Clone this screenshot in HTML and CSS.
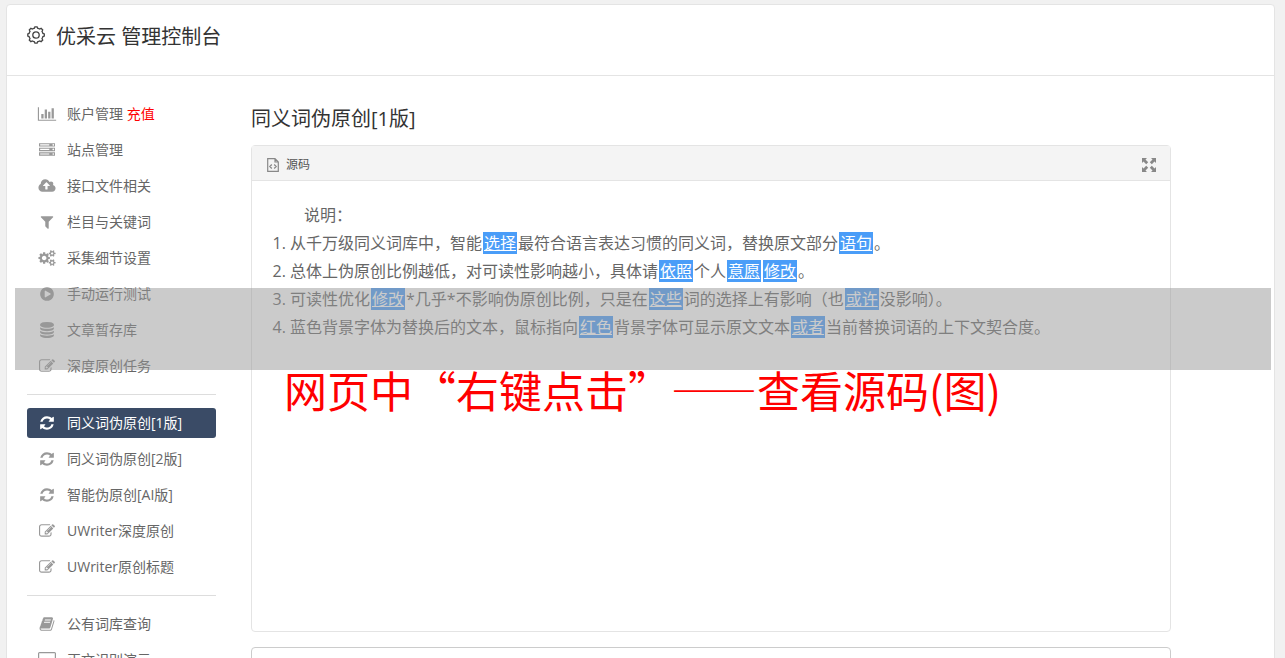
FILE: index.html
```
<!DOCTYPE html>
<html lang="zh-CN">
  <head>
    <meta charset="UTF-8" />
    <meta name="viewport" content="width=device-width, initial-scale=1.0" />
    <title>优采云 管理控制台</title>
    <link rel="stylesheet" href="styles.css">
  </head>
  <body>
    <svg class="sprite" aria-hidden="true">
      <symbol id="i-chart" viewBox="0 0 2048 1792"><path d="M640 896v512h-256v-512h256zm384-512v1024h-256v-1024h256zm1024 1152v128h-2048v-1536h128v1408h1920zm-640-896v768h-256v-768h256zm384-384v1152h-256v-1152h256z"/></symbol>
      <symbol id="i-server" viewBox="0 0 1792 1792"><path fill-rule="evenodd" d="M128 1408h1024v-128h-1024v128zm0-512h1024v-128h-1024v128zm1568 448q0-40-28-68t-68-28-68 28-28 68 28 68 68 28 68-28 28-68zm-1568-960h1024v-128h-1024v128zm1568 448q0-40-28-68t-68-28-68 28-28 68 28 68 68 28 68-28 28-68zm0-512q0-40-28-68t-68-28-68 28-28 68 28 68 68 28 68-28 28-68zm96 832v384h-1792v-384h1792zm0-512v384h-1792v-384h1792zm0-512v384h-1792v-384h1792z"/></symbol>
      <symbol id="i-upload" viewBox="0 0 2048 1792"><path fill-rule="evenodd" d="M1344 864q0-14-9-23l-352-352q-9-9-23-9t-23 9l-351 351q-10 12-10 24 0 14 9 23t23 9h224v352q0 13 9.500 22.500t22.500 9.500h192q13 0 22.500-9.500t9.500-22.500v-352h224q13 0 22.500-9.500t9.500-22.500zm640 288q0 159-112.500 271.500t-271.500 112.500h-1088q-185 0-316.500-131.500t-131.500-316.500q0-130 70-240t188-165q-2-30-2-43 0-212 150-362t362-150q156 0 285.500 87t188.500 231q71-62 166-62 106 0 181 75t75 181q0 76-41 138 130 31 213.500 135.500t83.500 238.500z"/></symbol>
      <symbol id="i-filter" viewBox="0 0 1792 1792"><path d="M1595 295q17 41-14 70l-493 493v742q0 42-39 59-13 5-25 5-27 0-45-19l-256-256q-19-19-19-45v-486l-493-493q-31-29-14-70 17-39 59-39h1280q42 0 59 39z"/></symbol>
      <symbol id="i-cogs" viewBox="0 0 1920 1792"><path fill-rule="evenodd" d="M896 896q0-106-75-181t-181-75-181 75-75 181 75 181 181 75 181-75 75-181zm768 512q0-52-38-90t-90-38-90 38-38 90q0 53 37.500 90.500t90.500 37.500 90.500-37.500 37.500-90.500zm0-1024q0-52-38-90t-90-38-90 38-38 90q0 53 37.500 90.500t90.500 37.500 90.500-37.500 37.500-90.500zm-384 421v185q0 10-7 19.500t-16 10.500l-155 24q-11 35-32 76 34 48 90 115 7 11 7 20 0 12-7 19-23 30-82.500 89.500t-78.500 59.500q-11 0-21-7l-115-90q-37 19-77 31-11 108-23 155-7 24-30 24h-186q-11 0-20-7.500t-10-17.500l-23-153q-34-10-75-31l-118 89q-7 7-20 7-11 0-21-8-144-133-144-160 0-9 7-19 10-14 41-53t47-61q-23-44-35-82l-152-24q-10-1-17-9.500t-7-19.500v-185q0-10 7-19.500t16-10.500l155-24q11-35 32-76-34-48-90-115-7-11-7-20 0-12 7-20 22-30 82-89t79-59q11 0 21 7l115 90q34-18 77-32 11-108 23-154 7-24 30-24h186q11 0 20 7.500t10 17.500l23 153q34 10 75 31l118-89q8-7 20-7 11 0 21 8 144 133 144 160 0 8-7 19-12 16-42 54t-45 60q23 48 34 82l152 23q10 2 17 10.500t7 19.500zm640 533v140q0 16-149 31-12 27-30 52 51 113 51 138 0 4-4 7-122 71-124 71-8 0-46-47t-52-68q-20 2-30 2t-30-2q-14 21-52 68t-46 47q-2 0-124-71-4-3-4-7 0-25 51-138-18-25-30-52-149-15-149-31v-140q0-16 149-31 13-29 30-52-51-113-51-138 0-4 4-7 4-2 35-20t59-34 30-16q8 0 46 46.500t52 67.500q20-2 30-2t30 2q51-71 92-112l6-2q4 0 124 70 4 3 4 7 0 25-51 138 17 23 30 52 149 15 149 31zm0-1024v140q0 16-149 31-12 27-30 52 51 113 51 138 0 4-4 7-122 71-124 71-8 0-46-47t-52-68q-20 2-30 2t-30-2q-14 21-52 68t-46 47q-2 0-124-71-4-3-4-7 0-25 51-138-18-25-30-52-149-15-149-31v-140q0-16 149-31 13-29 30-52-51-113-51-138 0-4 4-7 4-2 35-20t59-34 30-16q8 0 46 46.500t52 67.500q20-2 30-2t30 2q51-71 92-112l6-2q4 0 124 70 4 3 4 7 0 25-51 138 17 23 30 52 149 15 149 31z"/></symbol>
      <symbol id="i-play" viewBox="0 0 1792 1792"><path fill-rule="evenodd" d="M896 128q209 0 385.500 103t279.500 279.500 103 385.500-103 385.500-279.500 279.500-385.500 103-385.500-103-279.500-279.500-103-385.500 103-385.500 279.500-279.500 385.500-103zm384 823q32-18 32-55t-32-55l-544-320q-31-19-64-1-32 19-32 56v640q0 37 32 56 16 8 32 8 17 0 32-9z"/></symbol>
      <symbol id="i-database" viewBox="0 0 1792 1792"><path d="M896 768q237 0 443-43t325-127v170q0 69-103 128t-280 93.500-385 34.500-385-34.500-280-93.500-103-128v-170q119 84 325 127t443 43zm0 768q237 0 443-43t325-127v170q0 69-103 128t-280 93.500-385 34.500-385-34.500-280-93.500-103-128v-170q119 84 325 127t443 43zm0-384q237 0 443-43t325-127v170q0 69-103 128t-280 93.500-385 34.500-385-34.500-280-93.500-103-128v-170q119 84 325 127t443 43zm0-1152q208 0 385 34.500t280 93.500 103 128v128q0 69-103 128t-280 93.500-385 34.500-385-34.500-280-93.500-103-128v-128q0-69 103-128t280-93.500 385-34.500z"/></symbol>
      <symbol id="i-edit" viewBox="0 0 1792 1792"><path fill-rule="evenodd" d="M888 1184l116-116-152-152-116 116v56h96v96h56zm440-720q-16-16-33 1l-350 350q-17 17-1 33t33-1l350-350q17-17 1-33zm80 594v190q0 119-84.500 203.500t-203.500 84.500h-832q-119 0-203.500-84.500t-84.500-203.500v-832q0-119 84.500-203.500t203.500-84.500h832q63 0 117 25 15 7 18 23 3 17-9 29l-49 49q-14 14-32 8-23-6-45-6h-832q-66 0-113 47t-47 113v832q0 66 47 113t113 47h832q66 0 113-47t47-113v-126q0-13 9-22l64-64q15-15 35-7t20 29zm-96-738l288 288-672 672h-288v-288zm444 132l-92 92-288-288 92-92q28-28 68-28t68 28l152 152q28 28 28 68t-28 68z"/></symbol>
      <symbol id="i-refresh" viewBox="0 0 1792 1792"><path d="M1639 1056q0 5-1 7-64 268-268 434.500t-478 166.500q-146 0-282.500-55t-243.500-157l-129 129q-19 19-45 19t-45-19-19-45v-448q0-26 19-45t45-19h448q26 0 45 19t19 45-19 45l-137 137q71 66 161 102t187 36q134 0 250-65t186-179q11-17 53-117 8-23 30-23h192q13 0 22.500 9.500t9.500 22.500zm25-800v448q0 26-19 45t-45 19h-448q-26 0-45-19t-19-45 19-45l138-138q-148-137-349-137-134 0-250 65t-186 179q-11 17-53 117-8 23-30 23h-199q-13 0-22.500-9.500t-9.500-22.500v-7q65-268 270-434.500t480-166.500q146 0 284 55.500t245 156.500l130-129q19-19 45-19t45 19 19 45z"/></symbol>
      <symbol id="i-book" viewBox="0 0 1792 1792"><path fill-rule="evenodd" d="M1703 478q40 57 18 129l-275 906q-19 64-76.500 107.500t-122.500 43.500h-923q-77 0-148.500-53.500t-99.500-131.500q-24-67-2-127 0-4 3-27t4-37q1-8-3-21.500t-3-19.500q2-11 8-21t16.500-23.500 16.500-23.500q23-38 45-91.500t30-91.500q3-10 .5-30t-.5-28q3-11 17-28t17-23q21-36 42-92t25-90q1-9-2.500-32t.5-28q4-13 22-30.500t22-22.500q19-26 42.500-84.500t27.500-96.500q1-8-3-25.500t-2-26.500q2-8 9-18t18-23 17-21q8-12 16.500-30.500t15-35 16-36 19.500-32 26.500-23.500 36-11.500 47.500 5.500l-1 3q38-9 51-9h761q74 0 114 56t18 130l-274 906q-36 119-71.500 153.500t-128.500 34.500h-869q-27 0-38 15-11 16-1 43 24 70 144 70h923q29 0 56-15.500t35-41.500l300-987q7-22 5-57 38 15 59 43zm-1064 2q-4 13 2 22.500t20 9.500h608q13 0 25.500-9.500t16.500-22.500l21-64q4-13-2-22.500t-20-9.500h-608q-13 0-25.500 9.500t-16.500 22.500zm-83 256q-4 13 2 22.500t20 9.500h608q13 0 25.500-9.500t16.500-22.500l21-64q4-13-2-22.500t-20-9.500h-608q-13 0-25.500 9.500t-16.500 22.500z"/></symbol>
      <symbol id="i-desktop" viewBox="0 0 18 16"><path fill-rule="evenodd" d="M1.500 0h15A1.500 1.500 0 0 1 18 1.500v10a1.500 1.500 0 0 1-1.500 1.500H11v2h1v1H6v-1h1v-2H1.500A1.500 1.500 0 0 1 0 11.500v-10A1.500 1.500 0 0 1 1.500 0zM1.200 1.200v9h15.600v-9z"/></symbol>
    </svg>

    <div class="page">
      <header class="header">
        <svg class="gear" viewBox="0 0 18 18" aria-hidden="true">
          <path d="M6.300 2.500L7.400 2.200 7.900.8h2.200l.5 1.400 1.100.3 1 .6 1.400-.7 1.600 1.600-.7 1.400.6 1 .3 1 1.400.5v2.200l-1.400.5-.3 1-.6 1 .7 1.400-1.600 1.600-1.400-.7-1 .6-1.100.3-.5 1.400H7.900l-.5-1.400-1.100-.3-1-.6-1.400.7L2.300 14l.7-1.400-.6-1-.3-1L.8 10.100V7.900l1.300-.5.3-1 .6-1L2.300 4l1.600-1.600 1.400.7z"/>
          <circle cx="9" cy="9" r="3.200"/>
        </svg>
        <h1>优采云 管理控制台</h1>
      </header>

      <div class="body">
        <nav class="sidebar">
          <ul>
            <li><a href="#"><svg class="icon"><use href="#i-chart"/></svg><span>账户管理 <em>充值</em></span></a></li>
            <li><a href="#"><svg class="icon"><use href="#i-server"/></svg>站点管理</a></li>
            <li><a href="#"><svg class="icon"><use href="#i-upload"/></svg>接口文件相关</a></li>
            <li><a href="#"><svg class="icon"><use href="#i-filter"/></svg>栏目与关键词</a></li>
            <li><a href="#"><svg class="icon"><use href="#i-cogs"/></svg>采集细节设置</a></li>
            <li><a href="#"><svg class="icon"><use href="#i-play"/></svg>手动运行测试</a></li>
            <li><a href="#"><svg class="icon"><use href="#i-database"/></svg>文章暂存库</a></li>
            <li><a href="#"><svg class="icon"><use href="#i-edit"/></svg>深度原创任务</a></li>
          </ul>
          <ul>
            <li><a class="active" href="#"><svg class="icon"><use href="#i-refresh"/></svg>同义词伪原创[1版]</a></li>
            <li><a href="#"><svg class="icon"><use href="#i-refresh"/></svg>同义词伪原创[2版]</a></li>
            <li><a href="#"><svg class="icon"><use href="#i-refresh"/></svg>智能伪原创[AI版]</a></li>
            <li><a href="#"><svg class="icon"><use href="#i-edit"/></svg>UWriter深度原创</a></li>
            <li><a href="#"><svg class="icon"><use href="#i-edit"/></svg>UWriter原创标题</a></li>
          </ul>
          <ul>
            <li><a href="#"><svg class="icon"><use href="#i-book"/></svg>公有词库查询</a></li>
            <li><a href="#"><svg class="icon"><use href="#i-desktop"/></svg>正文识别演示</a></li>
          </ul>
        </nav>

        <main class="main">
          <h2>同义词伪原创[1版]</h2>
          <section class="editor">
            <div class="toolbar">
              <button type="button" class="source">
                <svg viewBox="0 0 12 14" aria-hidden="true"><path d="M.7.700h7.300l3.300 3.300v9.300H.7zM8 .7V4h3.300M4.800 6.500L2.800 8.500l2 2M7.200 6.500l2 2-2 2"/></svg>
                源码
              </button>
              <button type="button" class="expand" aria-label="全屏">
                <svg viewBox="0 0 14 14" aria-hidden="true"><path d="M0 0h5L3.500 1.500 6.200 4.200 4.200 6.200 1.500 3.500 0 5zM14 0v5l-1.500-1.500L9.800 6.200 7.800 4.200l2.700-2.700L9 0zM0 14V9l1.500 1.500L4.200 7.800 6.200 9.800l-2.700 2.700L5 14zM14 14H9l1.500-1.500L7.800 9.800 9.800 7.800l2.700 2.700L14 9z"/></svg>
              </button>
            </div>
            <div class="content">
              <p>说明：</p>
              <ol>
                <li>从千万级同义词库中，智能<a href="#">选择</a>最符合语言表达习惯的同义词，替换原文部分<a href="#">语句</a>。</li>
                <li>总体上伪原创比例越低，对可读性影响越小，具体请<a href="#">依照</a>个人<a href="#">意愿</a><a href="#">修改</a>。</li>
                <li>可读性优化<a href="#">修改</a>*几乎*不影响伪原创比例，只是在<a href="#">这些</a>词的选择上有影响（也<a href="#">或许</a>没影响）。</li>
                <li>蓝色背景字体为替换后的文本，鼠标指向<a href="#">红色</a>背景字体可显示原文文本<a href="#">或者</a>当前替换词语的上下文契合度。</li>
              </ol>
            </div>
          </section>
          <textarea class="result" aria-label="结果"></textarea>
        </main>
      </div>
    </div>

    <div class="banner">
      <div class="band"></div>
      <p>网页中“右键点击”——查看源码(图)</p>
    </div>
  </body>
</html>
```
FILE: styles.css
```
* {
  margin: 0;
  padding: 0;
  box-sizing: border-box;
}
body {
  position: relative;
  height: 100vh;
  overflow: hidden;
  padding: 4px 10px 0 6px;
  background: #f1f1f1;
  color: #666;
  font: 14px/20px "Open Sans", "Noto Sans CJK SC", sans-serif;
}
a {
  color: inherit;
  text-decoration: none;
}
ul {
  list-style: none;
}
button {
  border: 0;
  background: none;
  color: inherit;
  font: inherit;
}
.sprite {
  display: none;
}
.page {
  background: #fff;
  border: 1px solid #e4e4e4;
  border-radius: 4px;
}
.header {
  display: flex;
  align-items: flex-start;
  gap: 11px;
  padding: 16px 20px 22px;
  border-bottom: 1px solid #e4e4e4;
}
.header h1 {
  color: #333;
  font-size: 20px;
  font-weight: 400;
  line-height: 32px;
}
.gear {
  width: 18px;
  height: 18px;
  margin-top: 5px;
  fill: none;
  stroke: #444;
  stroke-width: 1.3;
}
.body {
  display: flex;
  gap: 35px;
  padding: 23px 103px 0 20px;
}

/* 侧边栏 */
.sidebar {
  flex: 0 0 189px;
}
.sidebar ul {
  display: flex;
  flex-direction: column;
  gap: 6px;
}
.sidebar ul + ul {
  margin-top: 13px;
  padding-top: 13px;
  border-top: 1px solid #ddd;
}
.sidebar a {
  display: flex;
  align-items: center;
  gap: 10px;
  height: 30px;
  padding: 0 10px;
  border-radius: 3px;
}
.sidebar em {
  color: #f00;
  font-style: normal;
}
.sidebar .active {
  background: #3a4b66;
  color: #fff;
}
.icon {
  width: 20px;
  height: 16px;
  fill: #999;
}
.active .icon {
  fill: #fff;
}

/* 编辑区 */
.main {
  flex: 1;
  min-width: 0;
}
.main h2 {
  padding: 4px 0 11px;
  color: #333;
  font-size: 20px;
  font-weight: 400;
  line-height: 31px;
}
.editor {
  min-height: 487px;
  border: 1px solid #e4e4e4;
  border-radius: 4px;
}
.toolbar {
  display: flex;
  align-items: center;
  justify-content: space-between;
  height: 35px;
  padding: 3px 14px 0 15px;
  background: #f4f4f4;
  border-bottom: 1px solid #e4e4e4;
}
.source {
  display: flex;
  align-items: center;
  gap: 7px;
  color: #555;
  font-size: 12px;
}
.source svg {
  width: 12px;
  height: 14px;
  fill: none;
  stroke: #888;
  stroke-width: 1.2;
}
.expand svg {
  display: block;
  width: 14px;
  height: 14px;
  fill: #888;
}
.content {
  padding: 20px;
  font-size: 16px;
  line-height: 28px;
}
.content p {
  text-indent: 2em;
}
.content ol {
  padding-left: 18px;
}
.content a {
  margin: 0 1px;
  padding: 0 1px;
  background: #4a9df8;
  color: #fff;
  text-decoration: underline;
}
.result {
  display: block;
  width: 100%;
  height: 120px;
  margin-top: 15px;
  border: 1px solid #ccc;
  border-radius: 4px;
  resize: none;
}

/* 横幅，覆盖在页面上 */
.banner {
  position: absolute;
  top: 288px;
  left: 15px;
  right: 14px;
}
.band {
  height: 82px;
  background: rgba(151, 151, 151, .5);
}
.banner p {
  padding-left: 269px;
  color: #f00;
  font-family: "Noto Sans CJK SC", sans-serif;
  font-size: 43px;
  line-height: 38px;
  white-space: nowrap;
}
```
